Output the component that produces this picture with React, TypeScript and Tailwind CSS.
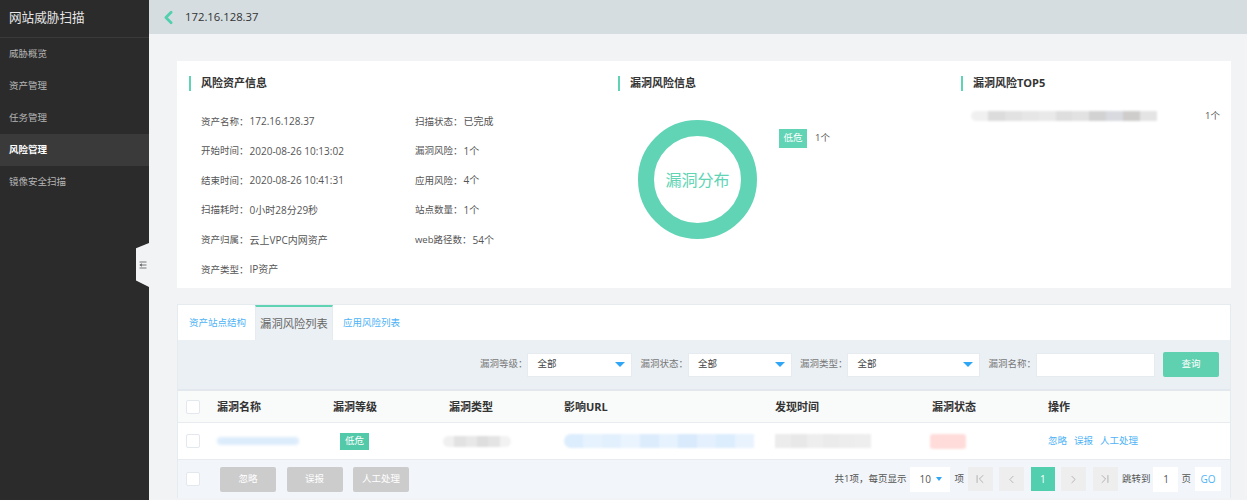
import React from 'react'
import { ChevronLeft, ChevronRight, ChevronFirst, ChevronLast } from 'lucide-react'

const COLON = '\uFF1A'
const COMMA = '\uFF0C'

const NAV = ['威胁概览', '资产管理', '任务管理', '风险管理', '镜像安全扫描']

const LEFT_INFO = [
  ['资产名称', '172.16.128.37'],
  ['开始时间', '2020-08-26 10:13:02'],
  ['结束时间', '2020-08-26 10:41:31'],
  ['扫描耗时', '0小时28分29秒'],
  ['资产归属', '云上VPC内网资产'],
  ['资产类型', 'IP资产'],
]

const RIGHT_INFO = [
  ['扫描状态', '已完成'],
  ['漏洞风险', '1个'],
  ['应用风险', '4个'],
  ['站点数量', '1个'],
  ['web路径数', '54个'],
]

const COLUMNS = ['漏洞名称', '漏洞等级', '漏洞类型', '影响URL', '发现时间', '漏洞状态', '操作']

// mosaic cells for the parts of the screenshot that were pixelated out
const TOP5_CELLS = ['bg-[#f0f0f0]', 'bg-[#dcdcdc]', 'bg-[#e2e2e2]', 'bg-[#e6e6e6]', 'bg-[#e9e9e9]', 'bg-[#dedede]', 'bg-[#e2e2e2]', 'bg-[#d2d2d2]', 'bg-[#d8dae0]', 'bg-[#cfcdcb]', 'bg-[#e4e4e4]']
const URL_CELLS = ['bg-[#dcedfd]', 'bg-[#e6f2fd]', 'bg-[#e2f0fd]', 'bg-[#eaf4fe]', 'bg-[#dcecfc]', 'bg-[#e6f2fd]', 'bg-[#d8eafc]', 'bg-[#e4f0fd]', 'bg-[#dcedfd]', 'bg-[#e8f3fe]']
const TIME_CELLS = ['bg-[#ececec]', 'bg-[#e8e8e8]', 'bg-[#eeeeee]', 'bg-[#ebebeb]', 'bg-[#ededed]', 'bg-[#eeeeee]']
const TYPE_CELLS = ['bg-[#f0f0f0]', 'bg-[#e2e2e2]', 'bg-[#e8e8e8]', 'bg-[#dedede]', 'bg-[#e4e4e4]', 'bg-[#f2f2f2]']

function Mosaic({ cells, className }: { cells: string[]; className: string }) {
  return (
    <div className={`flex overflow-hidden ${className}`}>
      {cells.map((c, i) => (
        <div key={i} className={`flex-1 ${c}`} />
      ))}
    </div>
  )
}

function SectionTitle({ text }: { text: string }) {
  return (
    <div className="flex h-[15px] items-center border-l-[2px] border-[#5fd3b3] pl-[10px] text-[11px] font-bold text-[#333]">
      {text}
    </div>
  )
}

function InfoRow({ label, value }: { label: string; value: string }) {
  return (
    <div className="flex h-[29.6px] items-center text-[9.5px] text-[#555]">
      <span>{label}{COLON}</span>
      <span className="ml-[1px] text-[10px]">{value}</span>
    </div>
  )
}

function Filter({ label, width }: { label: string; width: string }) {
  return (
    <div className="flex items-center">
      <span className="text-[9.5px] text-[#777]">{label}{COLON}</span>
      <div className={`${width} flex h-[24px] items-center justify-between border border-[#e6ebf0] bg-white pl-[9px] pr-[6px] text-[9.5px] text-[#444]`}>
        <span>全部</span>
        <span className="h-0 w-0 border-x-[5px] border-t-[5px] border-x-transparent border-t-[#2fa5f5]" />
      </div>
    </div>
  )
}

function CheckBox() {
  return <div className="h-[14px] w-[14px] rounded-[2px] border border-[#e3e8ee] bg-white" />
}

function GrayButton({ text }: { text: string }) {
  return (
    <div className="flex h-[25px] w-[56px] items-center justify-center rounded-[2px] bg-[#cccccc] text-[9.5px] text-white">
      {text}
    </div>
  )
}

function PageButton({ children, active }: { children: React.ReactNode; active?: boolean }) {
  return (
    <div
      className={
        active
          ? 'flex h-[24px] w-[24px] items-center justify-center bg-[#52cfae] text-[10px] text-white'
          : 'flex h-[24px] w-[25px] items-center justify-center bg-[#eeeeee] text-[#999]'
      }
    >
      {children}
    </div>
  )
}

export default function App() {
  return (
    <div className="relative flex h-[500px] w-[1247px] overflow-hidden bg-[#f2f3f5] font-['Open_Sans','Noto_Sans_CJK_SC',sans-serif]">
      {/* Sidebar */}
      <aside className="w-[149px] shrink-0 bg-[#2b2b2b]">
        <div className="flex h-[38px] items-center border-b border-[#3a3a3a] pl-[9px] text-[12.6px] text-[#e8e8e8]">
          网站威胁扫描
        </div>
        <nav>
          {NAV.map((item) => (
            <div
              key={item}
              className={
                item === '风险管理'
                  ? 'flex h-[32px] items-center bg-[#3a3a3a] pl-[9px] text-[9.5px] font-bold text-white'
                  : 'flex h-[32px] items-center pl-[9px] text-[9.5px] text-[#b5b5b5]'
              }
            >
              {item}
            </div>
          ))}
        </nav>
      </aside>

      {/* Collapse notch */}
      <div className="absolute left-[136px] top-[243px] flex h-[44px] w-[13px] items-center justify-center bg-[#f2f3f5] [clip-path:polygon(100%_0,100%_100%,0_85%,0_12%)]">
        <svg width="8" height="8" viewBox="0 0 8 8" fill="none" stroke="#777" strokeWidth="1">
          <path d="M0.5 1h7M3 4h4.5M0.5 7h7" />
          <path d="M2.5 2.8 0.8 4l1.7 1.2z" fill="#777" />
        </svg>
      </div>

      <div className="min-w-0 flex-1">
        {/* Header */}
        <header className="flex h-[34px] items-center bg-[#d5dde1] pl-[9px]">
          <ChevronLeft size={21} strokeWidth={3.2} className="text-[#52cfae]" />
          <span className="ml-[6px] text-[11.3px] text-[#333]">172.16.128.37</span>
        </header>

        <main className="pl-[28px] pr-[16px] pt-[27px]">
          {/* Summary card */}
          <section className="flex h-[227px] bg-white pt-[15px]">
            <div className="w-[441px] pl-[12px]">
              <SectionTitle text="风险资产信息" />
              <div className="mt-[16px] flex pl-[12px]">
                <div className="w-[214px]">
                  {LEFT_INFO.map(([label, value]) => (
                    <InfoRow key={label} label={label} value={value} />
                  ))}
                </div>
                <div>
                  {RIGHT_INFO.map(([label, value]) => (
                    <InfoRow key={label} label={label} value={value} />
                  ))}
                </div>
              </div>
            </div>

            <div className="w-[343px]">
              <SectionTitle text="漏洞风险信息" />
              <div className="mt-[29px] flex pl-[20px]">
                <div className="flex h-[119px] w-[119px] items-center justify-center rounded-full border-[16px] border-[#60d4b5] text-[16px] text-[#60d4b5]">
                  <span className="whitespace-nowrap">漏洞分布</span>
                </div>
                <div className="ml-[22px] mt-[9px] flex h-[19px] items-center">
                  <span className="flex h-[19px] w-[28px] items-center justify-center bg-[#60d4b5] text-[9.5px] text-white">
                    低危
                  </span>
                  <span className="ml-[8px] text-[9.5px] text-[#555]">1个</span>
                </div>
              </div>
            </div>

            <div className="flex-1">
              <SectionTitle text="漏洞风险TOP5" />
              <div className="mt-[18px] flex items-center justify-between pl-[10px] pr-[11px]">
                <Mosaic cells={TOP5_CELLS} className="h-[10px] w-[186px] rounded-l-full blur-[1px]" />
                <span className="text-[9.5px] text-[#555]">1个</span>
              </div>
            </div>
          </section>

          {/* List card */}
          <section className="mt-[16px] border-x border-[#e6ebf0] bg-white">
            <div className="flex h-[36px] border-t border-[#e6ebf0]">
              <div className="flex w-[77px] items-center pl-[11px] pt-[1px] text-[9.5px] text-[#4fb3f6]">资产站点结构</div>
              <div className="flex w-[78px] items-center justify-center border-x border-t-[2px] border-[#e6ebf0] border-t-[#5fd3b3] bg-[#ebf0f4] pt-[1px] text-[11.3px] text-[#666]">
                漏洞风险列表
              </div>
              <div className="flex items-center pl-[10px] pt-[1px] text-[9.5px] text-[#4fb3f6]">应用风险列表</div>
            </div>

            <div className="flex h-[51px] items-center justify-end gap-[8px] border-b-[2px] border-[#e3e8ee] bg-[#ebf0f4] pr-[11px]">
              <Filter label="漏洞等级" width="w-[105px]" />
              <Filter label="漏洞状态" width="w-[104px]" />
              <Filter label="漏洞类型" width="w-[133px]" />
              <div className="flex items-center">
                <span className="text-[9.5px] text-[#777]">漏洞名称{COLON}</span>
                <div className="h-[24px] w-[119px] border border-[#e6ebf0] bg-white" />
              </div>
              <div className="flex h-[25px] w-[56px] items-center justify-center rounded-[2px] bg-[#5fd0b0] text-[9.5px] text-white">
                查询
              </div>
            </div>

            <div className="grid h-[32px] grid-cols-[39px_116px_116px_115px_211px_157px_116px_1fr] items-center border-b border-[#e8ecf0] bg-[#f9fafa]">
              <div className="pl-[8px]">
                <CheckBox />
              </div>
              {COLUMNS.map((col) => (
                <div key={col} className="pt-[2px] text-[11px] font-bold text-[#333]">
                  {col}
                </div>
              ))}
            </div>

            <div className="grid h-[37px] grid-cols-[39px_116px_116px_115px_211px_157px_116px_1fr] items-center border-b border-[#e8ecf0] bg-white">
              <div className="pl-[8px]">
                <CheckBox />
              </div>
              <div className="h-[8px] w-[82px] rounded-full bg-[#dcecfb] blur-[1.5px]" />
              <div className="pl-[7px]">
                <span className="flex h-[17px] w-[29px] items-center justify-center bg-[#52c9a8] text-[9.5px] text-white">
                  低危
                </span>
              </div>
              <Mosaic cells={TYPE_CELLS} className="h-[11px] w-[68px] -translate-x-[6px] rounded-full blur-[1px]" />
              <Mosaic cells={URL_CELLS} className="h-[14px] w-[190px] rounded-l-lg blur-[1px]" />
              <Mosaic cells={TIME_CELLS} className="h-[14px] w-[96px] blur-[1px]" />
              <div className="h-[15px] w-[36px] -translate-x-[2px] rounded-[3px] bg-[#ffdcda] blur-[1px]" />
              <div className="flex gap-[7px] text-[9.5px] text-[#4fb3f6]">
                <span>忽略</span>
                <span>误报</span>
                <span>人工处理</span>
              </div>
            </div>

            <div className="flex h-[38px] items-center justify-between bg-[#f2f5fa] pl-[8px] pr-[9px]">
              <div className="flex items-center">
                <CheckBox />
                <div className="ml-[20px] flex gap-[10.5px]">
                  <GrayButton text="忽略" />
                  <GrayButton text="误报" />
                  <GrayButton text="人工处理" />
                </div>
              </div>
              <div className="flex items-center text-[9.5px] text-[#555]">
                <span>共1项{COMMA}每页显示</span>
                <div className="ml-[4px] flex h-[25px] w-[40px] items-center justify-between bg-white pl-[9px] pr-[8px] text-[10px]">
                  <span>10</span>
                  <span className="h-0 w-0 border-x-[3.5px] border-t-[4px] border-x-transparent border-t-[#2fa5f5]" />
                </div>
                <span className="ml-[4px]">项</span>
                <div className="ml-[4px] flex gap-[6.5px]">
                  <PageButton>
                    <ChevronFirst size={14} strokeWidth={1.2} />
                  </PageButton>
                  <PageButton>
                    <ChevronLeft size={13} strokeWidth={1.2} />
                  </PageButton>
                  <PageButton active>1</PageButton>
                  <PageButton>
                    <ChevronRight size={13} strokeWidth={1.2} />
                  </PageButton>
                  <PageButton>
                    <ChevronLast size={14} strokeWidth={1.2} />
                  </PageButton>
                </div>
                <span className="ml-[4px]">跳转到</span>
                <div className="ml-[3px] flex h-[25px] w-[25px] items-center justify-center bg-white text-[10px]">1</div>
                <span className="ml-[3px]">页</span>
                <div className="ml-[4px] flex h-[24px] w-[26px] items-center justify-center bg-white text-[10px] text-[#4fb3f6]">
                  GO
                </div>
              </div>
            </div>
          </section>
        </main>
      </div>
    </div>
  )
}
